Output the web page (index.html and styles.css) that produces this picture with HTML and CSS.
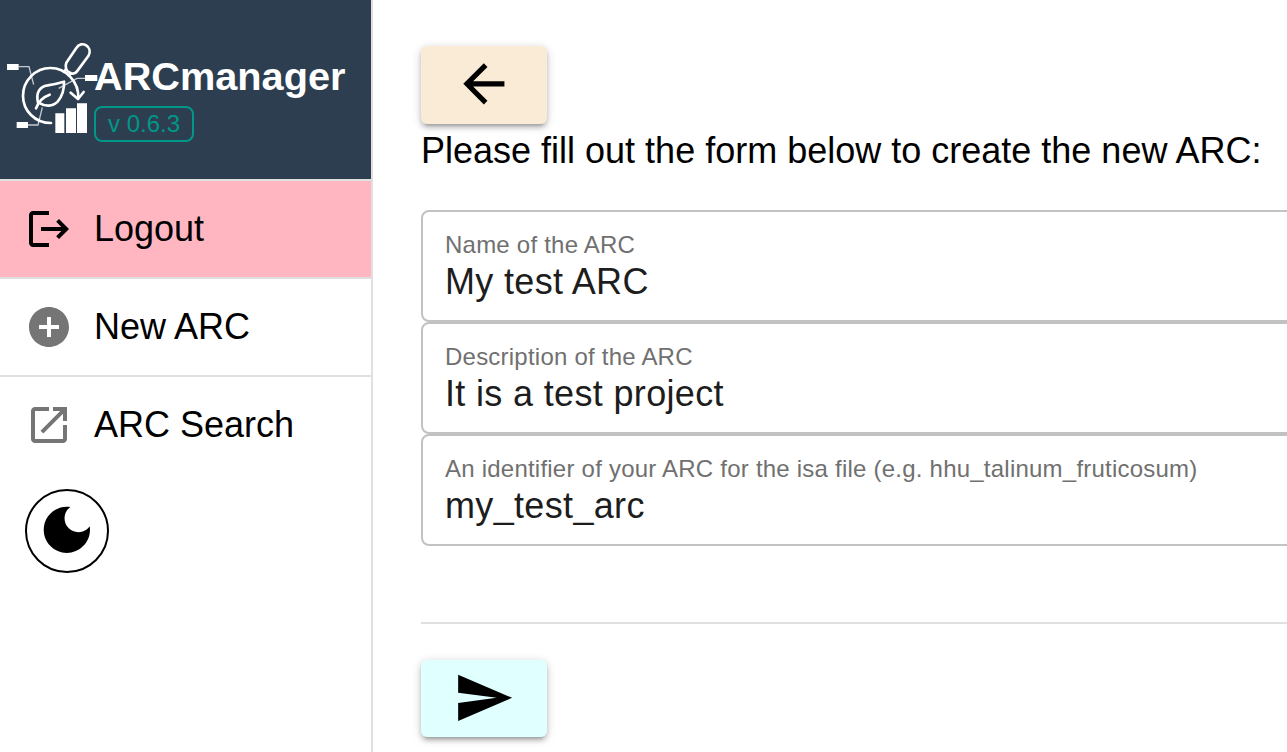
FILE: index.html
```html
<!DOCTYPE html>
<html lang="en">
<head>
<meta charset="utf-8">
<title>ARCmanager</title>
<link rel="stylesheet" href="styles.css">
</head>
<body>
<div class="layout">
  <aside class="sidebar">
    <header class="brand">
      <svg class="logo" viewBox="0 0 282 360" fill="none" stroke="#fff">
        <g stroke-width="4" stroke="#c3c9d0">
          <path d="M56 110H87L101 164M256 145H231L176 175M84 285H114L127 232"/>
        </g>
        <g fill="#fff" stroke="none">
          <path d="M21 102h35v18H21zM255 135h37v18h-37zM50 276h34v18H50zM166 250h27v59h-27zM198 235h30v74h-30zM231 220h30v89h-30z"/>
        </g>
        <g stroke-width="8" stroke-linecap="round" stroke-linejoin="round">
          <path d="M153 279C105 279 69 242 69 197C69 151 107 114 151 114C199 114 237 156 235 205"/>
          <path d="M212 188L234 207L251 186"/>
          <path d="M199 98L229 54C244 29 281 50 265 78L231 124C225 132 216 132 209 128L203 124C197 119 196 106 199 98ZM198 117L192 126M213 129L208 136"/>
          <path d="M108 235C116 212 129 201 149 194M114 219C107 188 119 169 143 166C163 163 178 159 192 155C193 176 187 198 173 215C158 230 136 231 116 218"/>
        </g>
      </svg>
      <div class="brand-text">
        <div class="brand-name">ARCmanager</div>
        <div class="version">v 0.6.3</div>
      </div>
    </header>
    <nav>
      <a class="nav-item logout">
        <svg class="nav-icon" viewBox="0 0 24 24"><path d="M17 7l-1.41 1.41L18.17 11H8v2h10.17l-2.58 2.58L17 17l5-5zM4 5h8V3H4c-1.1 0-2 .9-2 2v14c0 1.1.9 2 2 2h8v-2H4V5z"/></svg>
        <span>Logout</span>
      </a>
      <a class="nav-item">
        <svg class="nav-icon muted" viewBox="0 0 24 24"><path d="M12 2C6.48 2 2 6.48 2 12s4.48 10 10 10 10-4.48 10-10S17.52 2 12 2zm5 11h-4v4h-2v-4H7v-2h4V7h2v4h4v2z"/></svg>
        <span>New ARC</span>
      </a>
      <a class="nav-item last">
        <svg class="nav-icon muted" viewBox="0 0 24 24"><path d="M19 19H5V5h7V3H5c-1.11 0-2 .9-2 2v14c0 1.1.89 2 2 2h14c1.1 0 2-.9 2-2v-7h-2v7zM14 3v2h3.59l-9.83 9.83 1.41 1.41L19 6.41V10h2V3h-7z"/></svg>
        <span>ARC Search</span>
      </a>
    </nav>
    <button class="theme-toggle" aria-label="Dark mode">
      <svg class="button-icon" viewBox="0 0 24 24"><path d="M12 3c-4.97 0-9 4.03-9 9s4.03 9 9 9 9-4.03 9-9c0-.46-.04-.92-.1-1.36-.98 1.37-2.58 2.26-4.4 2.26-2.98 0-5.4-2.42-5.4-5.4 0-1.81.89-3.42 2.26-4.4C12.92 3.04 12.46 3 12 3z"/></svg>
    </button>
  </aside>
  <main class="content">
    <button class="button back" aria-label="Back">
      <svg class="button-icon" viewBox="0 0 24 24"><path d="M20 11H7.83l5.59-5.59L12 4l-8 8 8 8 1.41-1.41L7.83 13H20v-2z"/></svg>
    </button>
    <p class="intro">Please fill out the form below to create the new ARC:</p>
    <form class="fields">
      <div class="field"><div class="label">Name of the ARC</div><div class="value">My test ARC</div></div>
      <div class="field"><div class="label">Description of the ARC</div><div class="value">It is a test project</div></div>
      <div class="field"><div class="label">An identifier of your ARC for the isa file (e.g. hhu_talinum_fruticosum)</div><div class="value">my_test_arc</div></div>
    </form>
    <hr class="divider">
    <button class="button send" aria-label="Send">
      <svg class="button-icon" viewBox="0 0 24 24"><path d="M2.01 21L23 12 2.01 3 2 10l15 2-15 2z"/></svg>
    </button>
  </main>
</div>
</body>
</html>
```
FILE: styles.css
```css
* { box-sizing: border-box; }
body {
  margin: 0;
  background: #fff;
  color: #000;
  font-family: "Liberation Sans", Arial, sans-serif;
  font-size: 36px;
}
.layout { display: flex; height: 752px; overflow: hidden; }
.sidebar { flex: none; width: 373px; border-right: 2px solid #e0e0e0; }
.brand {
  display: flex;
  height: 181px;
  padding-top: 30px;
  background: #2d3e50;
  border-bottom: 2px solid #e0e0e0;
}
.logo { flex: none; width: 94px; height: 120px; overflow: visible; }
.brand-text { padding-top: 21px; }
.brand-name {
  color: #fff;
  font-size: 39.7px;
  font-weight: bold;
  line-height: 50px;
}
.version {
  width: 100px;
  height: 36px;
  margin-top: 5px;
  padding-left: 12px;
  border: 2px solid #009688;
  border-radius: 8px;
  color: #009688;
  font-size: 24px;
  line-height: 32px;
  white-space: nowrap;
}
.nav-item {
  display: flex;
  align-items: center;
  gap: 21px;
  height: 98px;
  padding-left: 25px;
  border-bottom: 2px solid #e0e0e0;
  line-height: 50px;
}
.nav-item.last { height: 96px; border-bottom: 0; }
.logout { background: #ffb6c1; }
.nav-icon { width: 48px; height: 48px; }
.muted { fill: #757575; }
.theme-toggle {
  display: flex;
  align-items: center;
  justify-content: center;
  width: 84px;
  height: 84px;
  margin: 16px 0 0 25px;
  padding: 0;
  border: 2px solid #000;
  border-radius: 50%;
  background: #fff;
}
.button-icon { flex: none; width: 61.7px; height: 61.7px; }
.theme-toggle .button-icon { margin: -2px 0 0 .5px; }
.content { flex: none; width: 960px; padding: 46px 0 0 48px; }
.button {
  display: flex;
  align-items: center;
  justify-content: center;
  width: 126px;
  height: 78px;
  padding: 0 0 2px;
  border: 0;
  border-radius: 6px;
  box-shadow: 0 2px 10px rgba(0,0,0,.2), 0 4px 4px rgba(0,0,0,.14), 0 6px 2px -4px rgba(0,0,0,.12);
}
.back { background: #faebd7; }
.send { height: 77px; padding-bottom: 1px; background: #e0ffff; }
.intro { margin: 2px 0 0; line-height: 50px; white-space: nowrap; }
.fields { margin-top: 34px; }
.field {
  height: 112px;
  padding: 16px 22px;
  border: 2px solid #c2c2c2;
  border-radius: 8px;
  letter-spacing: .00937em;
}
.label { color: #707070; font-size: 24px; line-height: 34px; letter-spacing: .00937em; }
.value { color: #1d1d1d; line-height: 40px; }
.divider { height: 2px; margin: 76px 0 36px; border: 0; background: #e0e0e0; }
```
